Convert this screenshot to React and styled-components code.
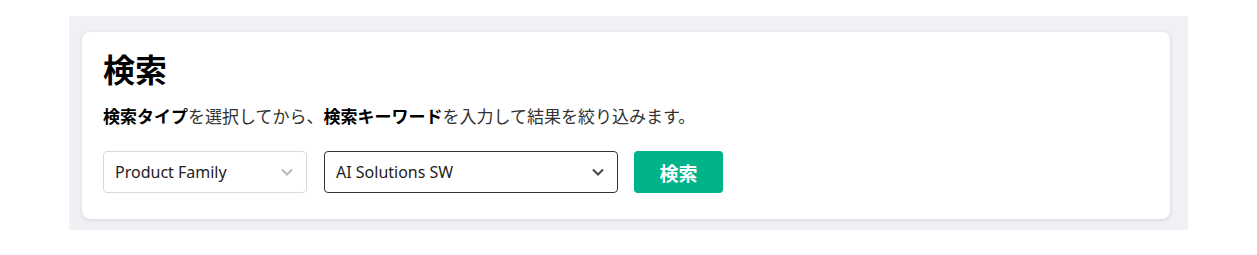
import React from "react";
import styled, { createGlobalStyle } from "styled-components";

const Global = createGlobalStyle`
  html, body { margin: 0; padding: 0; background: #fff; }
  body { font-family: "Noto Sans", "Noto Sans CJK JP", sans-serif; color: #000; }
`;

const Page = styled.div`
  padding: 16px 0 0 69px;
`;

const Panel = styled.section`
  width: 1119px;
  box-sizing: border-box;
  background: #f0f1f5;
  padding: 16px 18px 11px 13px;
`;

const Card = styled.div`
  background: #fff;
  border-radius: 8px;
  box-shadow: 0 1px 4px rgba(0, 0, 0, 0.12);
  padding: 18px 21px 0;
  height: 187px;
  box-sizing: border-box;
`;

const Title = styled.h1`
  margin: 0;
  font-family: "Noto Sans CJK JP", sans-serif;
  font-size: 32px;
  font-weight: 700;
  line-height: 36px;
`;

const Desc = styled.p`
  margin: 19px 0 0;
  font-family: "Noto Sans CJK JP", sans-serif;
  font-size: 17px;
  line-height: 22px;
  color: #333;
  b { font-weight: 700; color: #000; }
`;

const Row = styled.div`
  display: flex;
  align-items: center;
  margin-top: 24px;
`;

const Select = styled.div`
  display: flex;
  align-items: center;
  justify-content: space-between;
  box-sizing: border-box;
  width: ${(p) => p.$w}px;
  height: 42px;
  margin-right: ${(p) => p.$gap}px;
  padding: 0 12px 0 11px;
  border: 1px solid ${(p) => (p.$active ? "#333" : "#d9d9d9")};
  border-radius: 4px;
  font-size: 16px;
  color: #222;
`;

const Chevron = styled.svg`
  width: 14px;
  height: 14px;
  stroke: ${(p) => (p.$active ? "#444" : "#bbb")};
  stroke-width: 2;
  fill: none;
`;

const Button = styled.button`
  width: 89px;
  height: 42px;
  border: none;
  border-radius: 4px;
  background: #00b388;
  color: #fff;
  font-family: "Noto Sans CJK JP", sans-serif;
  font-size: 19px;
  font-weight: 700;
`;

function Dropdown({ label, width, gap, active }) {
  return (
    <Select $w={width} $gap={gap} $active={active}>
      <span>{label}</span>
      <Chevron $active={active} viewBox="0 0 14 14">
        <path d="M2 4.5 L7 9.5 L12 4.5" />
      </Chevron>
    </Select>
  );
}

export default function App() {
  return (
    <>
      <Global />
      <Page>
        <Panel>
          <Card>
            <Title>検索</Title>
            <Desc>
              <b>検索タイプ</b>を選択してから、<b>検索キーワード</b>を入力して結果を絞り込みます。
            </Desc>
            <Row>
              <Dropdown label="Product Family" width={204} gap={17} />
              <Dropdown label="AI Solutions SW" width={294} gap={16} active />
              <Button>検索</Button>
            </Row>
          </Card>
        </Panel>
      </Page>
    </>
  );
}
